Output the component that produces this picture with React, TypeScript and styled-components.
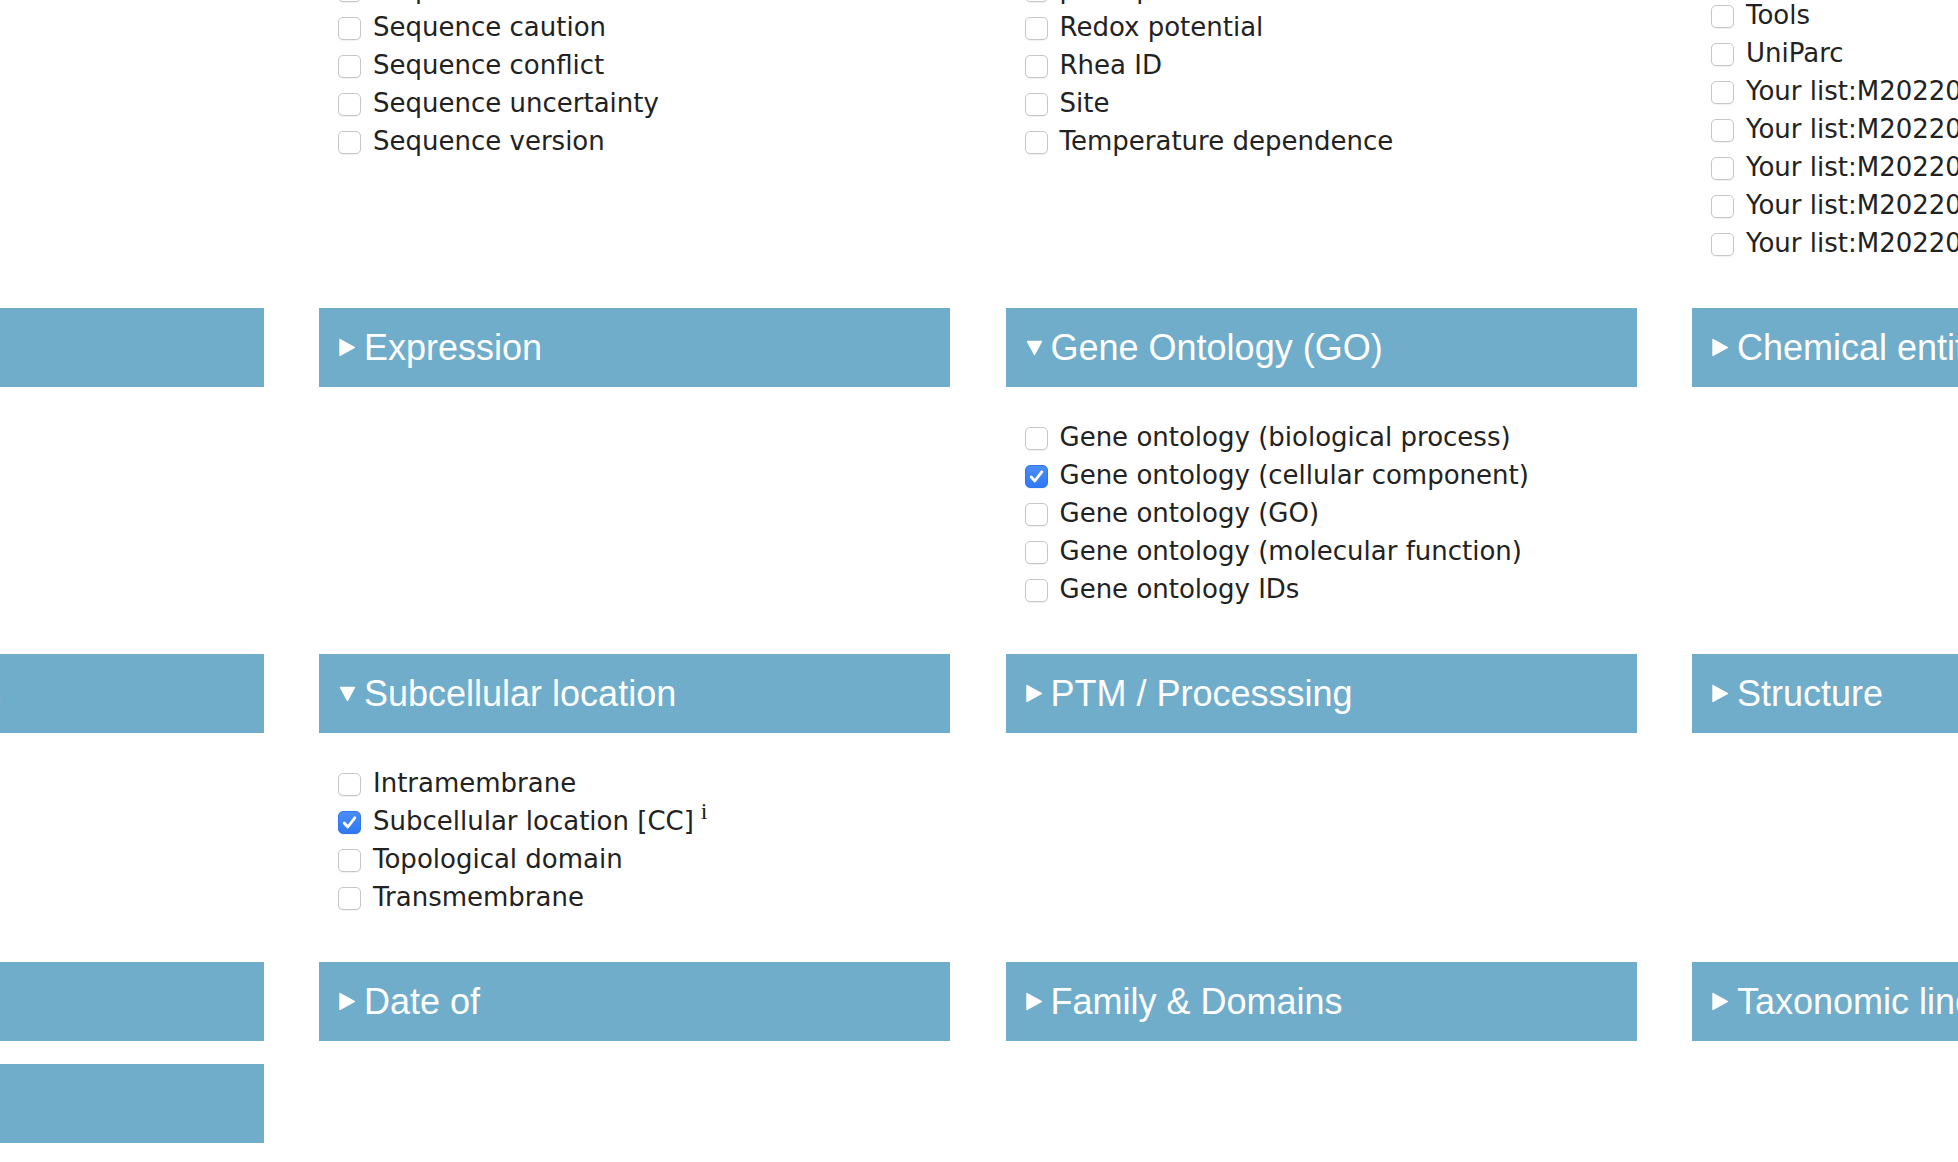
import React from 'react'
import styled, { createGlobalStyle } from 'styled-components'

interface Field {
  label: string,
  checked?: boolean,
  info?: boolean,
}

interface Category {
  title: string,
  open?: boolean,
  lead?: number,
  fields?: Field[],
}

const GlobalStyle = createGlobalStyle`
  html, body {
    margin: 0;
    padding: 0;
    background: #fff;
  }

  body {
    font-family: 'DejaVu Sans', Verdana, sans-serif;
    color: #222;
  }
`

const Viewport = styled.div`
    width: 100vw;
    height: 100vh;
    overflow: hidden;
  `

// the page is scrolled: first visible column is cut at the left edge
const Grid = styled.div`
    display: grid;
    grid-template-columns: repeat(4, 631px);
    column-gap: 55.5px;
    row-gap: 23px;
    align-items: start;
    width: max-content;
    margin-left: -367.5px;
    margin-top: -190px;
  `

const Section = styled.section`
    display: flex;
    flex-direction: column;
  `

const Header = styled.div`
    height: 79px;
    display: flex;
    align-items: center;
    gap: 8px;
    padding-left: 20px;
    background: #6fadcb;
    color: #fff;
    font-family: 'Liberation Sans', Arial, Helvetica, sans-serif;
    font-size: 36px;
    white-space: nowrap;
    cursor: pointer;
  `

const Marker = styled.svg`
    flex: none;
    width: 17px;
    height: 19px;
  `

interface ListProps {
  $lead?: number,
}

const List = styled.ul<ListProps>`
    list-style: none;
    margin: 0;
    padding: ${props => 31 + (props.$lead ?? 0)}px 0 23px 19px;
  `

const Item = styled.li`
    display: flex;
    align-items: center;
    gap: 12px;
    height: 38px;
    font-size: 26px;
    line-height: 38px;
    white-space: nowrap;
  `

interface BoxProps {
  $checked?: boolean,
}

const Box = styled.span<BoxProps>`
    flex: none;
    display: flex;
    align-items: center;
    justify-content: center;
    box-sizing: border-box;
    width: 23px;
    height: 23px;
    margin-top: 2px;
    border-radius: 5px;
    border: 1px solid ${props => props.$checked ? '#2f76ef' : '#c6c6c6'};
    background: ${props => props.$checked ? 'linear-gradient(#4a8ef8, #2f78f4)' : '#fff'};
    box-shadow: 0 1px 1px rgba(0, 0, 0, 0.06);
  `

const Info = styled.sup`
    font-family: 'Liberation Serif', 'Times New Roman', serif;
    font-size: 24px;
    line-height: 0;
    vertical-align: 11px;
    margin-left: 7px;
  `

const yourList = (id: string): Field => ({ label: 'Your list:' + id })

const categories: Category[] = [
  { title: 'Names & Taxonomy' },
  {
    title: 'Sequences',
    open: true,
    lead: 12,
    fields: [
      { label: 'RNA editing' },
      { label: 'Sequence' },
      { label: 'Sequence caution' },
      { label: 'Sequence conflict' },
      { label: 'Sequence uncertainty' },
      { label: 'Sequence version' },
    ],
  },
  {
    title: 'Function',
    open: true,
    lead: 12,
    fields: [
      { label: 'Pathway' },
      { label: 'pH dependence' },
      { label: 'Redox potential' },
      { label: 'Rhea ID' },
      { label: 'Site' },
      { label: 'Temperature dependence' },
    ],
  },
  {
    title: 'Miscellaneous',
    open: true,
    fields: [
      { label: 'Protein existence' },
      { label: 'Reviewed' },
      { label: 'Tools' },
      { label: 'UniParc' },
      yourList('M20220921A6F3C9D27B1E4F08A5C2D7B3E9F14A6'),
      yourList('M20220921B2D8E4F61C9A3B57D0E2F8A4C6B91D3'),
      yourList('M20220922C7E1A5B93D4F6C20E8A1B7D5F3C62E9'),
      yourList('M20220922D3F9B6C14E7A2D85F1B3C9E6A0D47F2'),
      yourList('M20220923E8A4C2D76F1B9E30A6C4D8B2F5E13A7'),
    ],
  },
  { title: 'Interaction' },
  { title: 'Expression' },
  {
    title: 'Gene Ontology (GO)',
    open: true,
    fields: [
      { label: 'Gene ontology (biological process)' },
      { label: 'Gene ontology (cellular component)', checked: true },
      { label: 'Gene ontology (GO)' },
      { label: 'Gene ontology (molecular function)' },
      { label: 'Gene ontology IDs' },
    ],
  },
  { title: 'Chemical entities' },
  { title: 'Pathology & Biotech' },
  {
    title: 'Subcellular location',
    open: true,
    fields: [
      { label: 'Intramembrane' },
      { label: 'Subcellular location [CC]', checked: true, info: true },
      { label: 'Topological domain' },
      { label: 'Transmembrane' },
    ],
  },
  { title: 'PTM / Processsing' },
  { title: 'Structure' },
  { title: 'Publications' },
  { title: 'Date of' },
  { title: 'Family & Domains' },
  { title: 'Taxonomic lineage' },
  { title: 'Taxonomic identifier' },
]

function Arrow({ open }: { open?: boolean }) {
  return (
    <Marker viewBox='0 0 17 19'>
      {open
        ? <path d='M1.5 3.5 L15.5 3.5 L8.5 16.5 Z' fill='#fff' stroke='#fff' strokeWidth='1.4' strokeLinejoin='round' />
        : <path d='M1 1.5 L15.5 9.5 L1 17.5 Z' fill='#fff' stroke='#fff' strokeWidth='1.4' strokeLinejoin='round' />}
    </Marker>
  )
}

function Checkbox({ checked }: { checked?: boolean }) {
  return (
    <Box $checked={checked}>
      {checked && (
        <svg width='17' height='17' viewBox='0 0 17 17'>
          <path d='M3.2 9 L6.8 13 L13.8 3.8' fill='none' stroke='#fff' strokeWidth='2.8' strokeLinecap='round' strokeLinejoin='round' />
        </svg>
      )}
    </Box>
  )
}

function CategoryBlock({ category }: { category: Category }) {
  return (
    <Section>
      <Header>
        <Arrow open={category.open} />
        <span>{category.title}</span>
      </Header>

      {category.open && category.fields && (
        <List $lead={category.lead}>
          {category.fields.map(field => (
            <Item key={field.label}>
              <Checkbox checked={field.checked} />
              <span>
                {field.label}
                {field.info && <Info>i</Info>}
              </span>
            </Item>
          ))}
        </List>
      )}
    </Section>
  )
}

function App() {
  return (
    <>
      <GlobalStyle />
      <Viewport>
        <Grid>
          {categories.map(category => (
            <CategoryBlock key={category.title} category={category} />
          ))}
        </Grid>
      </Viewport>
    </>
  )
}

export default App
